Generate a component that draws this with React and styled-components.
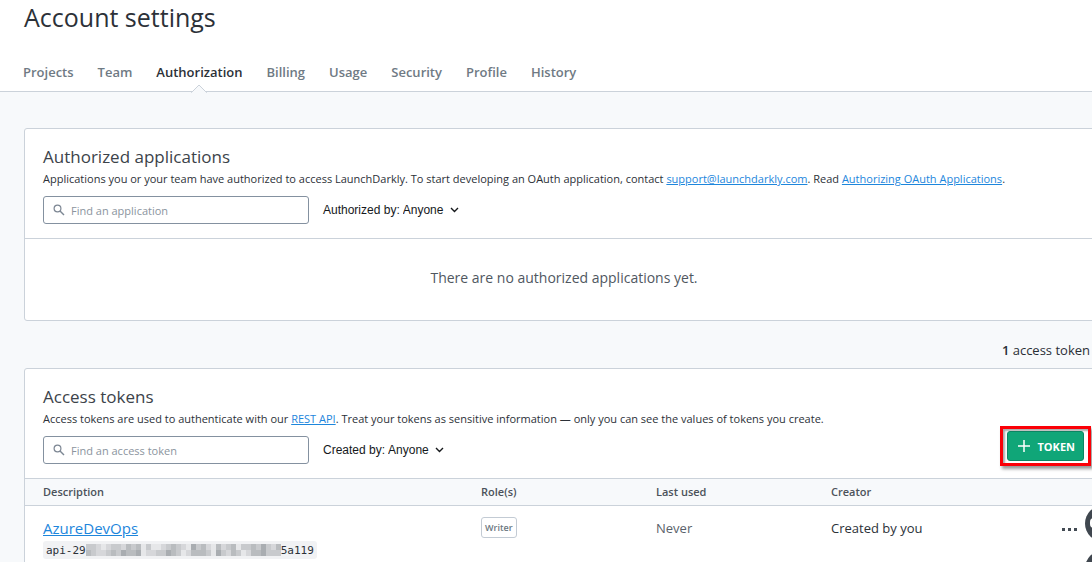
import React from "react";
import styled, { createGlobalStyle } from "styled-components";

const Global = createGlobalStyle`
  * { box-sizing: border-box; }
  body { margin: 0; background: #f7f9fb; overflow-x: hidden; font-family: "Open Sans", "Noto Sans", sans-serif; font-size: 12px; color: #2a2f36; }
  h1, h2, p { margin: 0; font-weight: 400; }
  a { color: #1d86dc; }
`;
const Page = styled.div` overflow: clip; `;
const Header = styled.header` background: #fff; border-bottom: 1px solid #cbd2da; padding: 0 24px; height: 92px; `;
const Title = styled.h1` font-size: 25px; line-height: 34px; color: #2c3138; `;
const Tabs = styled.nav` display: flex; gap: 24px; margin-top: 28px; margin-left: -1px; `;
const Tab = styled.a`
  position: relative; height: 30px; line-height: 20px; font-size: 13px; font-weight: 600; text-decoration: none;
  color: ${(p) => (p.$active ? "#2c3138" : "#6f7a84")};
`;
const Notch = styled.svg` position: absolute; left: 50%; bottom: -1px; margin-left: -8px; `;
const Main = styled.main` padding: 36px 0 0 24px; margin-right: -12px; `;
const Card = styled.section` background: #fff; border: 1px solid #cbd2da; border-radius: 3px; `;
const CardHead = styled.div` height: 109px; padding: 16px 18px 0; `;
const CardTitle = styled.h2` font-size: 17px; line-height: 24px; color: #3c434a; `;
const Blurb = styled.p` font-size: 11px; line-height: 20px; white-space: nowrap; color: #2c3138; `;
const Filters = styled.div` display: flex; align-items: center; margin-top: 7px; `;
const Search = styled.label` display: flex; align-items: center; gap: 6px; width: 266px; height: 28px; padding: 0 9px; border: 1px solid #8491a0; border-radius: 3px; background: #fff; `;
const SearchInput = styled.input`
  flex: 1; min-width: 0; border: 0; outline: 0; padding: 0; background: none; font: inherit; font-size: 11px; color: #2a2f36;
  &::placeholder { color: #8b949e; opacity: 1; }
`;
const Filter = styled.label` display: flex; align-items: center; margin-left: 14px; font-family: "Liberation Sans", sans-serif; font-size: 12px; color: #15181b; `;
const Select = styled.select` appearance: none; border: 0; background: none; padding: 0; margin: 0 6px 0 3px; font: inherit; color: inherit; `;
const Empty = styled.p` padding: 27px 0 30px; border-top: 1px solid #cbd2da; text-align: center; font-size: 14px; line-height: 24px; color: #50575f; `;
const Count = styled.p` margin: 18px 14px 6px 0; text-align: right; font-size: 13px; line-height: 23px; `;
const Strong = styled.strong` font-weight: 600; `;
const Highlight = styled.div` align-self: flex-start; margin: -10px -6px -10px auto; border: 3px solid #fb0007; padding: 2px 4px; box-shadow: 2px 3px 3px #0006, inset 2px 2px 2px #0005; `;
const AddButton = styled.button`
  display: flex; align-items: center; gap: 7px; height: 30px; padding: 0 8px 0 10px; border: 1px solid #0b8562; border-radius: 3px;
  background: #10a678; color: #fff; font: 700 11px "Open Sans", sans-serif;
`;
const Table = styled.table` width: 100%; table-layout: fixed; border-collapse: collapse; text-align: left; `;
const Th = styled.th` width: ${(p) => p.$w || "auto"}; height: 27px; padding: 0 18px 2px; background: #f7f9fb; border: solid #cbd2da; border-width: 1px 0; font-size: 11px; font-weight: 600; color: #4b525a; `;
const Td = styled.td` height: 72px; padding: 12px 18px 0; vertical-align: top; font-size: 13px; line-height: 20px; color: ${(p) => p.$muted ? "#59616a" : "#2c3138"}; `;
const TokenName = styled.a` display: block; width: max-content; font-size: 15px; `;
const Code = styled.code` display: flex; align-items: center; width: max-content; height: 18px; margin-top: 3px; padding: 0 3px; border-radius: 3px; background: #f1f2f4; font: 11px "DejaVu Sans Mono", monospace; color: #2c3138; `;
const Badge = styled.span` display: block; width: max-content; height: 21px; margin-top: -1px; padding: 0 3px; border: 1px solid #c3cbd4; border-radius: 3px; font-size: 9px; line-height: 20px; font-weight: 600; color: #6c7781; `;
const LastCell = styled.div` display: flex; justify-content: space-between; `;
const More = styled.button` border: 0; background: none; padding: 4px 0 0; height: 20px; margin-right: 7px; display: flex; align-items: center; `;
const Bubbles = styled.div` position: fixed; right: -30px; top: 505px; display: grid; gap: 8px; `;
const Bubble = styled.button` display: grid; place-items: center; width: 37px; height: 37px; border: 0; border-radius: 50%; background: #40474f; padding: 0; `;

const SearchIcon = () => (
  <svg width="12" height="12" viewBox="0 0 12 12" fill="none" stroke="#7d8794" strokeWidth="1.2"><circle cx="4.500" cy="4.500" r="3.400" /><path d="M7 7l4 4" strokeWidth="1.500" /></svg>
);
const Chevron = () => (
  <svg width="9" height="6" viewBox="0 0 9 6" fill="none" stroke="#15181b" strokeWidth="1.4"><path d="M1 1l3.500 3.500L8 1" /></svg>
);
const shades = { a: "#e6e7e9", b: "#d6d7da", c: "#c8cacd", d: "#b9bcbf", e: "#a9adb1" };
const mosaicRows = ["ccbabccbdcdacaabcdcbaecdbadbcdaccdcecbd", "dcbbcdceddeabbccedcabdddcaecbdcabddeccc"];
const Mosaic = () => (
  <svg width="195" height="12" viewBox="0 0 195 12" shapeRendering="crispEdges" role="img" aria-label="hidden">
    {mosaicRows.map((row, y) => [...row].map((s, x) => (
      <rect key={`${x}-${y}`} x={x * 5} y={y * 6} width="5" height="6" fill={shades[s]} />
    )))}
  </svg>
);
const FilterBar = ({ placeholder, label, children }) => (
  <Filters>
    <Search><SearchIcon /><SearchInput placeholder={placeholder} aria-label={placeholder} /></Search>
    <Filter>{label}<Select><option>Anyone</option></Select><Chevron /></Filter>
    {children}
  </Filters>
);
const BubbleIcon = () => (
  <svg width="27" height="12" viewBox="0 0 27 12" fill="none" stroke="#fff" strokeWidth="2"><rect x="1" y="1" width="25" height="8" rx="3" /></svg>
);
const tabs = ["Projects", "Team", "Authorization", "Billing", "Usage", "Security", "Profile", "History"];

export default function App() {
  return (
    <Page>
      <Global />
      <Header>
        <Title>Account settings</Title>
        <Tabs>
          {tabs.map((t) => (
            <Tab key={t} href="#" $active={t === "Authorization"}>{t}
              {t === "Authorization" && <Notch width="16" height="9" viewBox="0 0 16 9"><path d="M0 9L8 1l8 8z" fill="#f7f9fb" /><path d="M0 8.500h.5L8 1l7.500 7.500h.5" fill="none" stroke="#cbd2da" /></Notch>}
            </Tab>
          ))}
        </Tabs>
      </Header>
      <Main>
        <Card>
          <CardHead>
            <CardTitle>Authorized applications</CardTitle>
            <Blurb>Applications you or your team have authorized to access LaunchDarkly. To start developing an OAuth application, contact <a href="#">support@launchdarkly.com</a>. Read <a href="#">Authorizing OAuth Applications</a>.</Blurb>
            <FilterBar placeholder="Find an application" label="Authorized by:" />
          </CardHead>
          <Empty>There are no authorized applications yet.</Empty>
        </Card>
        <Count><Strong>1</Strong> access token</Count>
        <Card>
          <CardHead>
            <CardTitle>Access tokens</CardTitle>
            <Blurb>Access tokens are used to authenticate with our <a href="#">REST API</a>. Treat your tokens as sensitive information — only you can see the values of tokens you create.</Blurb>
            <FilterBar placeholder="Find an access token" label="Created by:">
              <Highlight><AddButton><svg width="12" height="12" stroke="#fff" strokeWidth="1.5"><path d="M6 0v12M0 6h12" /></svg>TOKEN</AddButton></Highlight>
            </FilterBar>
          </CardHead>
          <Table>
            <thead><tr><Th>Description</Th><Th $w="175px">Role(s)</Th><Th $w="175px">Last used</Th><Th $w="290px">Creator</Th></tr></thead>
            <tbody><tr>
              <Td><TokenName href="#">AzureDevOps</TokenName><Code>api-29<Mosaic />5a119</Code></Td>
              <Td><Badge>Writer</Badge></Td>
              <Td $muted>Never</Td>
              <Td><LastCell>Created by you<More aria-label="More actions"><svg width="16" height="4" fill="#434b54"><path d="M0 0h3v3H0zM6 0h3v3H6zM12 0h3v3h-3z" /></svg></More></LastCell></Td>
            </tr></tbody>
          </Table>
        </Card>
      </Main>
      <Bubbles><Bubble aria-label="Help"><BubbleIcon /></Bubble><Bubble aria-label="Feedback" /></Bubbles>
    </Page>
  );
}
